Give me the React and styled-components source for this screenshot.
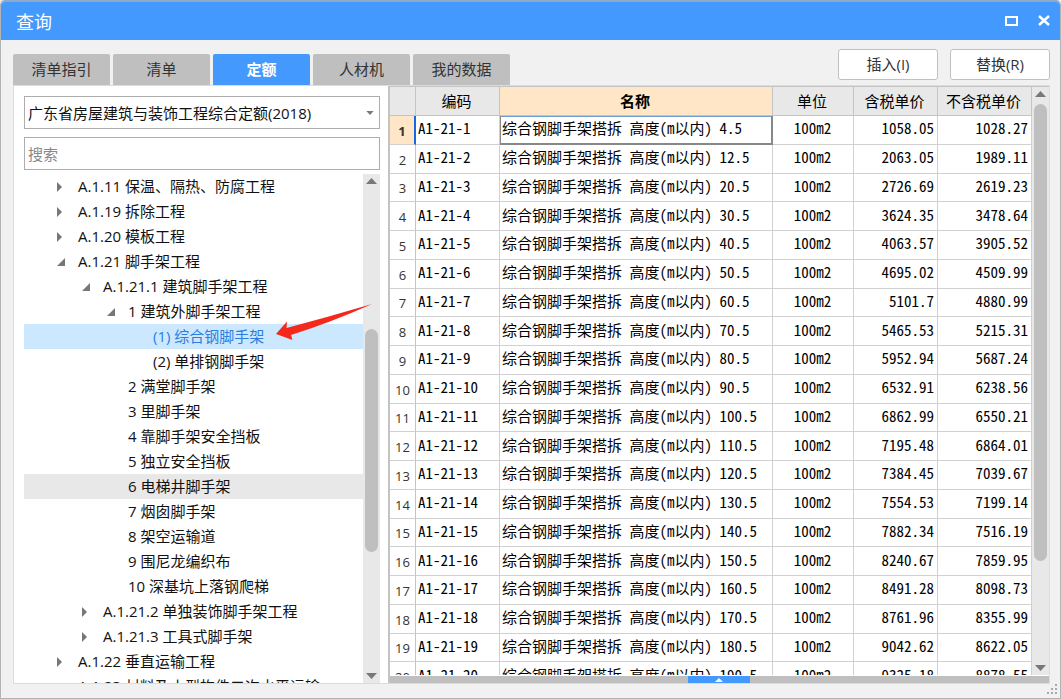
import React, { useState } from 'react';
import styled, { createGlobalStyle } from 'styled-components';

// --- DATA ---
const tabs = ['清单指引', '清单', '定额', '人材机', '我的数据'];

const treeItems = [
  { level: 0, state: 'closed', label: 'A.1.11 保温、隔热、防腐工程' },
  { level: 0, state: 'closed', label: 'A.1.19 拆除工程' },
  { level: 0, state: 'closed', label: 'A.1.20 模板工程' },
  { level: 0, state: 'open', label: 'A.1.21 脚手架工程' },
  { level: 1, state: 'open', label: 'A.1.21.1 建筑脚手架工程' },
  { level: 2, state: 'open', label: '1 建筑外脚手架工程' },
  { level: 3, label: '(1) 综合钢脚手架' },
  { level: 3, label: '(2) 单排钢脚手架' },
  { level: 2, label: '2 满堂脚手架' },
  { level: 2, label: '3 里脚手架' },
  { level: 2, label: '4 靠脚手架安全挡板' },
  { level: 2, label: '5 独立安全挡板' },
  { level: 2, label: '6 电梯井脚手架', hovered: true },
  { level: 2, label: '7 烟囱脚手架' },
  { level: 2, label: '8 架空运输道' },
  { level: 2, label: '9 围尼龙编织布' },
  { level: 2, label: '10 深基坑上落钢爬梯' },
  { level: 1, state: 'closed', label: 'A.1.21.2 单独装饰脚手架工程' },
  { level: 1, state: 'closed', label: 'A.1.21.3 工具式脚手架' },
  { level: 0, state: 'closed', label: 'A.1.22 垂直运输工程' },
  { level: 0, label: 'A.1.23 材料及小型构件二次水平运输' },
];

const rows = [
  { height: '4.5', taxed: '1058.05', untaxed: '1028.27' },
  { height: '12.5', taxed: '2063.05', untaxed: '1989.11' },
  { height: '20.5', taxed: '2726.69', untaxed: '2619.23' },
  { height: '30.5', taxed: '3624.35', untaxed: '3478.64' },
  { height: '40.5', taxed: '4063.57', untaxed: '3905.52' },
  { height: '50.5', taxed: '4695.02', untaxed: '4509.99' },
  { height: '60.5', taxed: '5101.7', untaxed: '4880.99' },
  { height: '70.5', taxed: '5465.53', untaxed: '5215.31' },
  { height: '80.5', taxed: '5952.94', untaxed: '5687.24' },
  { height: '90.5', taxed: '6532.91', untaxed: '6238.56' },
  { height: '100.5', taxed: '6862.99', untaxed: '6550.21' },
  { height: '110.5', taxed: '7195.48', untaxed: '6864.01' },
  { height: '120.5', taxed: '7384.45', untaxed: '7039.67' },
  { height: '130.5', taxed: '7554.53', untaxed: '7199.14' },
  { height: '140.5', taxed: '7882.34', untaxed: '7516.19' },
  { height: '150.5', taxed: '8240.67', untaxed: '7859.95' },
  { height: '160.5', taxed: '8491.28', untaxed: '8098.73' },
  { height: '170.5', taxed: '8761.96', untaxed: '8355.99' },
  { height: '180.5', taxed: '9042.62', untaxed: '8622.05' },
  { height: '190.5', taxed: '9325.18', untaxed: '8878.55' },
];

// --- STYLED COMPONENTS ---
const GlobalStyle = createGlobalStyle`
  *, *::before, *::after {
    box-sizing: border-box;
  }

  body {
    margin: 0;
    background: #f1f1f1;
    color: #111;
    font-family: 'Open Sans', 'Noto Sans CJK SC', sans-serif;
    font-size: 15px;
  }

  button, input, select {
    font: inherit;
    color: inherit;
  }
`;

const Window = styled.div`
  display: flex;
  flex-direction: column;
  height: 100vh;
  border: 1px solid #b4b4b4;
  border-top: 2px solid #8fa9c6;
  border-radius: 5px 5px 0 0;
  background: #f1f1f1;
  overflow: hidden;
`;

const TitleBar = styled.header`
  display: flex;
  align-items: center;
  justify-content: space-between;
  height: 38px;
  flex: none;
  padding: 0 8px 0 15px;
  background: #4499ff;
  color: #fff;
`;

const Title = styled.h1`
  margin: 0;
  padding-top: 2px;
  font-size: 18px;
  font-weight: 400;
  line-height: 24px;
`;

const WindowButtons = styled.div`
  display: flex;
  gap: 16px;
`;

const WindowButton = styled.button`
  display: flex;
  width: 16px;
  height: 16px;
  padding: 0;
  border: none;
  background: none;
  cursor: pointer;
`;

const Toolbar = styled.div`
  display: flex;
  justify-content: space-between;
  flex: none;
  height: 45px;
  padding: 0 10px 0 12px;
`;

const TabList = styled.nav`
  display: flex;
  align-items: flex-end;
  gap: 3px;
`;

const Tab = styled.button`
  width: 97px;
  height: 31px;
  padding: 0 0 2px;
  border: none;
  border-radius: 2px 2px 0 0;
  background: ${({ $active }) => ($active ? '#4499ff' : '#bfbfbf')};
  color: ${({ $active }) => ($active ? '#fff' : '#333')};
  font-weight: ${({ $active }) => ($active ? 700 : 400)};
  line-height: 24px;
  cursor: pointer;
`;

const Actions = styled.div`
  display: flex;
  gap: 12px;
  padding-top: 9px;
`;

const ActionButton = styled.button`
  width: 100px;
  height: 31px;
  padding: 0 0 2px;
  border: 1px solid #c0c0c0;
  border-radius: 3px;
  background: #fff;
  color: #333;
  line-height: 24px;
  cursor: pointer;
`;

const Content = styled.main`
  display: flex;
  flex: 1;
  min-height: 0;
  margin: 0 10px 0 12px;
  border: 1px solid #dcdcdc;
  background: #fff;
`;

const Sidebar = styled.aside`
  display: flex;
  flex-direction: column;
  flex: none;
  width: 374px;
  padding: 10px 8px 0 10px;
`;

const SelectBox = styled.div`
  display: grid;
  align-items: center;
  margin-bottom: 8px;

  > * {
    grid-area: 1 / 1;
  }

  svg {
    justify-self: end;
    margin-right: 6px;
    pointer-events: none;
  }
`;

const Select = styled.select`
  appearance: none;
  width: 100%;
  height: 33px;
  padding: 0 24px 0 3px;
  border: 1px solid #adadad;
  border-radius: 0;
  background: #fff;
`;

const SearchInput = styled.input`
  width: 100%;
  height: 33px;
  padding: 0 3px;
  border: 1px solid #adadad;
  background: #fff;
  outline: none;

  &::placeholder {
    color: #888;
    opacity: 1;
  }
`;

const TreeArea = styled.div`
  display: flex;
  flex: 1;
  min-height: 0;
  margin-top: 4px;
`;

const Tree = styled.ul`
  flex: 1;
  margin: 0;
  padding: 0;
  list-style: none;
  overflow: hidden;
`;

const treeBackground = ({ $selected, $hovered }) => {
  if ($selected) return '#cce8ff';
  return $hovered ? '#e8e8e8' : 'transparent';
};

const TreeRow = styled.li`
  display: flex;
  align-items: center;
  height: 25px;
  padding-left: ${({ $level }) => 32 + $level * 25}px;
  background: ${treeBackground};
  color: ${({ $selected }) => ($selected ? '#2a7de1' : 'inherit')};
  line-height: 25px;
  white-space: nowrap;
  cursor: default;
`;

const Toggle = styled.span`
  display: flex;
  width: 22px;
  flex: none;
`;

const ScrollTrack = styled.div`
  display: flex;
  flex-direction: column;
  align-items: center;
  flex: none;
  width: 17px;
  padding: 4px 0;
  background: #e8e8e8;
`;

const ScrollThumb = styled.div`
  width: 13px;
  height: ${({ $size }) => $size};
  margin-top: ${({ $offset }) => $offset};
  margin-bottom: auto;
  border-radius: 7px;
  background: #bfbfbf;
`;

const TablePanel = styled.section`
  display: flex;
  flex-direction: column;
  flex: 1;
  min-width: 0;
  border-left: 2px solid #c4c4c4;
  border-top: 1px solid #c4c4c4;
`;

const TableArea = styled.div`
  display: flex;
  flex: 1;
  min-height: 0;
`;

const TableClip = styled.div`
  flex: 1;
  min-width: 0;
  overflow: hidden;
`;

/* Half-width Latin forms keep digits at half the width of a Chinese character */
const Table = styled.table`
  width: 100%;
  height: 604px;
  border-collapse: separate;
  border-spacing: 0;
  table-layout: fixed;
  color: #000;
  font-family: 'Noto Sans CJK SC', sans-serif;
  font-feature-settings: 'hwid';
  line-height: 22px;
`;

const HeadCell = styled.th`
  height: 29px;
  padding: 0 2px 0 0;
  border-right: 1px solid #c4c4c4;
  border-bottom: 1px solid #c4c4c4;
  background: ${({ $current }) => ($current ? '#ffe6c7' : '#e8e8e8')};
  font-weight: ${({ $current }) => ($current ? 700 : 400)};
`;

const RowNumber = styled.th`
  padding: 2px 0 0;
  border-right: ${({ $current }) => ($current ? '2px solid #1a66e0' : '1px solid #c4c4c4')};
  border-bottom: 1px solid #d0d0d0;
  background: ${({ $current }) => ($current ? '#ffe6c7' : '#fff')};
  color: #333;
  font-family: 'Open Sans', sans-serif;
  font-size: 13px;
  font-weight: ${({ $current }) => ($current ? 700 : 400)};
`;

const Cell = styled.td`
  padding: 0 3px 3px 2px;
  border-right: 1px solid #d0d0d0;
  border-bottom: 1px solid #d0d0d0;
  text-align: ${({ $align }) => $align || 'left'};
  white-space: nowrap;
  box-shadow: ${({ $focused }) =>
    $focused ? 'inset 1px 0 0 #888, inset -1px -1px 0 #888, inset 0 1px 0 #6f9bd8' : 'none'};
  border-color: ${({ $focused }) => ($focused ? '#888' : '#d0d0d0')};
`;

const SplitterBar = styled.div`
  display: flex;
  justify-content: center;
  flex: none;
  height: 7px;
  margin-top: 1px;
  padding-right: 2px;
  background: #bfbfbf;
`;

const SplitterButton = styled.button`
  display: flex;
  align-items: center;
  justify-content: center;
  width: 62px;
  height: 7px;
  padding: 0;
  border: none;
  background: #4499ff;
`;

const StatusBar = styled.footer`
  display: flex;
  justify-content: flex-end;
  flex: none;
  height: 14px;
  padding-right: 2px;
`;

const ArrowLayer = styled.div`
  position: absolute;
  top: 302px;
  left: 274px;
  pointer-events: none;
`;

// --- ICONS ---
const UpIcon = () => (
  <svg width="11" height="6" viewBox="0 0 11 6" aria-hidden="true">
    <path d="M5.5 0L11 6H0z" fill="#77777f" />
  </svg>
);

const DownIcon = ({ width = 11, height = 6 }) => (
  <svg width={width} height={height} viewBox="0 0 11 6" aria-hidden="true">
    <path d="M0 0h11L5.5 6z" fill="#77777f" />
  </svg>
);

const ToggleIcon = ({ open }) => (
  <svg width="10" height="10" viewBox="0 0 10 10" aria-hidden="true">
    {open ? (
      <path d="M9 1v8H1z" fill="#777" />
    ) : (
      <path d="M1 0l5 5-5 5z" fill="#777" />
    )}
  </svg>
);

const GripIcon = () => (
  <svg width="11" height="11" viewBox="0 0 11 11" fill="#aaa" aria-hidden="true">
    <path d="M8 0h2v2H8zM4 4h2v2H4zM8 4h2v2H8zM0 8h2v2H0zM4 8h2v2H4zM8 8h2v2H8z" />
  </svg>
);

const RedArrow = () => (
  <svg width="100" height="38" viewBox="0 0 100 38" aria-hidden="true">
    <path d="M2 32L13 19.500l-.5 6.500Q54 15 98 2Q58 20 17 33l1.500 5z" fill="#f5281c" />
  </svg>
);

// --- The Query Window ---
const App = () => {
  const [activeTab, setActiveTab] = useState('定额');
  const [selected, setSelected] = useState('(1) 综合钢脚手架');

  return (
    <>
      <GlobalStyle />
      <Window>
        <TitleBar>
          <Title>查询</Title>
          <WindowButtons>
            <WindowButton aria-label="最大化">
              <svg width="16" height="16" viewBox="0 0 16 16" fill="none">
                <path d="M2 4h11v8H2z" stroke="#fff" strokeWidth="2" />
              </svg>
            </WindowButton>
            <WindowButton aria-label="关闭">
              <svg width="16" height="16" viewBox="0 0 16 16" fill="none">
                <path d="M3 3l10 9M13 3L3 12" stroke="#fff" strokeWidth="2.500" />
              </svg>
            </WindowButton>
          </WindowButtons>
        </TitleBar>

        <Toolbar>
          <TabList>
            {tabs.map((tab) => (
              <Tab key={tab} $active={tab === activeTab} onClick={() => setActiveTab(tab)}>
                {tab}
              </Tab>
            ))}
          </TabList>
          <Actions>
            <ActionButton>插入(I)</ActionButton>
            <ActionButton>替换(R)</ActionButton>
          </Actions>
        </Toolbar>

        <Content>
          <Sidebar>
            <SelectBox>
              <Select aria-label="定额库">
                <option>广东省房屋建筑与装饰工程综合定额(2018)</option>
              </Select>
              <DownIcon width={8} height={4} />
            </SelectBox>
            <SearchInput type="text" placeholder="搜索" aria-label="搜索" />
            <TreeArea>
              <Tree>
                {treeItems.map((item) => (
                  <TreeRow
                    key={item.label}
                    $level={item.level}
                    $selected={item.label === selected}
                    $hovered={item.hovered}
                    onClick={() => setSelected(item.label)}
                  >
                    <Toggle>{item.state && <ToggleIcon open={item.state === 'open'} />}</Toggle>
                    {item.label}
                  </TreeRow>
                ))}
              </Tree>
              <ScrollTrack>
                <UpIcon />
                <ScrollThumb $size="223px" $offset="145px" />
                <DownIcon />
              </ScrollTrack>
            </TreeArea>
          </Sidebar>

          <TablePanel>
            <TableArea>
              <TableClip>
                <Table>
                  <colgroup>
                    <col width="26" />
                    <col width="84" />
                    <col />
                    <col width="81" />
                    <col width="84" />
                    <col width="94" />
                  </colgroup>
                  <thead>
                    <tr>
                      <HeadCell />
                      <HeadCell>编码</HeadCell>
                      <HeadCell $current>名称</HeadCell>
                      <HeadCell>单位</HeadCell>
                      <HeadCell>含税单价</HeadCell>
                      <HeadCell>不含税单价</HeadCell>
                    </tr>
                  </thead>
                  <tbody>
                    {rows.map((row, i) => (
                      <tr key={row.height}>
                        <RowNumber scope="row" $current={i === 0}>{i + 1}</RowNumber>
                        <Cell>{`A1-21-${i + 1}`}</Cell>
                        <Cell $focused={i === 0}>{`综合钢脚手架搭拆 高度(m以内) ${row.height}`}</Cell>
                        <Cell $align="center">100m2</Cell>
                        <Cell $align="right">{row.taxed}</Cell>
                        <Cell $align="right">{row.untaxed}</Cell>
                      </tr>
                    ))}
                  </tbody>
                </Table>
              </TableClip>
              <ScrollTrack>
                <UpIcon />
                <ScrollThumb $size="457px" $offset="7px" />
                <DownIcon />
              </ScrollTrack>
            </TableArea>
            <SplitterBar>
              <SplitterButton aria-label="展开">
                <svg width="8" height="4" viewBox="0 0 8 4">
                  <path d="M4 0l4 4H0z" fill="#fff" />
                </svg>
              </SplitterButton>
            </SplitterBar>
          </TablePanel>
        </Content>

        <StatusBar>
          <GripIcon />
        </StatusBar>
      </Window>

      <ArrowLayer>
        <RedArrow />
      </ArrowLayer>
    </>
  );
};

export default App;
